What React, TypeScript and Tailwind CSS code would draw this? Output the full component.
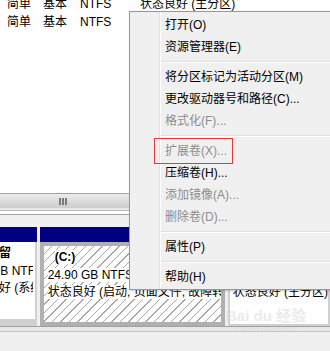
const font = "font-['Liberation_Sans','Noto_Sans_CJK_SC',sans-serif]"

type Item = { label: string; disabled?: boolean } | 'sep'

const menu: Item[] = [
  { label: '打开(O)' },
  { label: '资源管理器(E)' },
  'sep',
  { label: '将分区标记为活动分区(M)' },
  { label: '更改驱动器号和路径(C)...' },
  { label: '格式化(F)...', disabled: true },
  'sep',
  { label: '扩展卷(X)...', disabled: true },
  { label: '压缩卷(H)...' },
  { label: '添加镜像(A)...', disabled: true },
  { label: '删除卷(D)...', disabled: true },
  'sep',
  { label: '属性(P)' },
  'sep',
  { label: '帮助(H)' },
]

function VolumeRow() {
  return (
    <div className="flex h-[18px] items-center whitespace-nowrap pl-[7px]">
      <span className="w-[36px]">简单</span>
      <span className="w-[37px]">基本</span>
      <span className="w-[60px]">NTFS</span>
      <span>状态良好 (主分区)</span>
    </div>
  )
}

function ContextMenu() {
  return (
    <div className="absolute left-[129px] top-[11px] w-[230px] border border-[#979797] bg-[#f0f0f0] pt-[2px] pb-[1px] shadow-[1px_1px_2px_rgba(0,0,0,0.2)]">
      <div className="absolute left-[29px] top-0 bottom-0 w-px bg-[#e2e3e3]" />
      <div className="absolute left-[30px] top-0 bottom-0 w-px bg-white" />
      {menu.map((it, i) =>
        it === 'sep' ? (
          <div key={i} className="flex h-[8px] flex-col justify-center pl-[31px]">
            <div className="h-px bg-[#e0e0e0]" />
            <div className="h-px bg-white" />
          </div>
        ) : (
          <div
            key={i}
            className={`flex h-[22px] items-center pl-[35px] whitespace-nowrap ${
              it.disabled ? 'text-[#8d8d8d]' : 'text-black'
            }`}
          >
            {it.label}
          </div>
        ),
      )}
    </div>
  )
}

export default function App() {
  return (
    <div className={`relative h-[351px] w-[330px] overflow-hidden bg-[#f0f0f0] text-[12px] text-black ${font}`}>
      {/* volume list */}
      <div className="h-[194px] overflow-hidden border-b border-[#a0a0a0] bg-white">
        <div className="-mt-[5px]">
          <VolumeRow />
          <VolumeRow />
        </div>
      </div>

      {/* horizontal scrollbar */}
      <div className="flex h-[14px] items-center bg-gradient-to-b from-[#ececec] to-[#cdcdcd] pl-[59px]">
        <div className="flex h-[7px] gap-[1px]">
          <span className="w-[2px] bg-[#7a7a7a]" />
          <span className="w-[2px] bg-[#7a7a7a]" />
          <span className="w-[2px] bg-[#7a7a7a]" />
        </div>
      </div>
      <div className="h-[3px] border-b border-[#b8b8b8] bg-[#e8e8e8]" />
      <div className="h-[4px] border-b border-[#a0a0a0] bg-white" />
      <div className="h-[12px]" />

      {/* disk partitions */}
      <div className="flex h-[99px] gap-[3px]">
        <div className="flex w-[37px] flex-col">
          <div className="h-[15px] bg-[#000080]" />
          <div className="flex-1 border-r-2 border-b-[7px] border-[#d0d0d0] bg-white pt-[3px] leading-[17.5px] whitespace-nowrap">
            <div className="w-[33px] overflow-hidden">
              <div className="-ml-[37px] font-bold">系统保留</div>
              <div className="-ml-[33px]">100 MB NTFS</div>
              <div className="-ml-[37px]">状态良好 (系统, 活动, 主分区)</div>
            </div>
          </div>
        </div>
        <div className="flex w-[185px] flex-col">
          <div className="h-[15px] bg-[#000080]" />
          <div className="flex-1 overflow-hidden border-[4px] border-[#b0b0b0] bg-[repeating-linear-gradient(135deg,#ffffff_0px,#ffffff_5px,#a8a8a8_5px,#a8a8a8_6px)] pt-[3px] leading-[17.5px] whitespace-nowrap">
            <div className="pl-[11px]">
              <span className="bg-white font-bold">(C:)</span>
            </div>
            <div className="pl-[4px]">
              <span className="bg-white">24.90 GB NTFS</span>
            </div>
            <div className="pl-[4px]">
              <span className="bg-white">状态良好 (启动, 页面文件, 故障转储, 主分区)</span>
            </div>
          </div>
        </div>
        <div className="flex flex-1 flex-col">
          <div className="h-[15px] bg-[#000080]" />
          <div className="flex-1 overflow-hidden border-2 border-[#d0d0d0] bg-white pt-[5px] pl-[3px] leading-[17.5px] whitespace-nowrap">
            <div className="font-bold">新加卷 (D:)</div>
            <div>55.10 GB NTFS</div>
            <div>状态良好 (主分区)</div>
          </div>
        </div>
      </div>
      <div className="h-[6px] border-t border-b border-t-[#a0a0a0] border-b-[#c4c4c4] bg-[#e8e8e8]" />

      <ContextMenu />

      {/* annotation */}
      <div className="absolute left-[154px] top-[138px] h-[26px] w-[79px] border border-[#e53935]" />

      {/* watermark */}
      <div className="pointer-events-none absolute left-[226px] top-[307px] flex w-[80px] flex-col items-center text-[#d8d8d8] opacity-50">
        <div className="text-[15px] leading-[17px] font-bold whitespace-nowrap">Bai du 经验</div>
        <div className="text-[8px] leading-[10px] whitespace-nowrap">jingyan.baidu.com</div>
      </div>
    </div>
  )
}
